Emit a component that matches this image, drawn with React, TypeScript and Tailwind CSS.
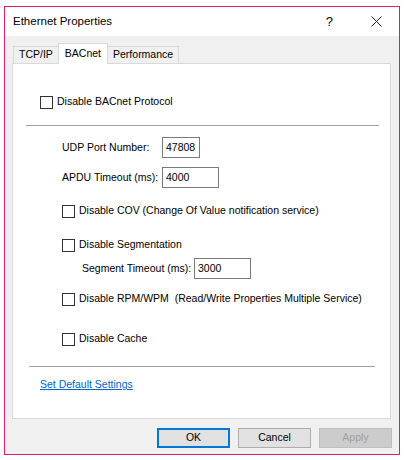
import React from 'react';

const font = { fontFamily: '"Liberation Sans", Arial, sans-serif' };

const Checkbox = ({ label }: { label: string }) => (
  <div className="flex items-center h-[20px]">
    <span className="w-[13px] h-[13px] border border-[#333333] bg-white shrink-0" />
    <span className="ml-[4px] text-[10.5px] text-black whitespace-pre">{label}</span>
  </div>
);

const Field = ({ label, value, labelW, inputW }: { label: string; value: string; labelW: string; inputW: string }) => (
  <div className="flex items-center h-[21px]">
    <span className={`${labelW} text-[10.5px] text-black`}>{label}</span>
    <div className={`${inputW} h-full border border-[#7a7a7a] bg-white flex items-center pl-[3px] text-[10.5px] text-black`}>
      {value}
    </div>
  </div>
);

const Tab = ({ label, active }: { label: string; active?: boolean }) =>
  active ? (
    <div className="h-[21px] -mb-px -mx-px z-10 px-[6px] bg-white border border-b-0 border-[#d9d9d9] flex items-center text-[10.5px] text-black">
      {label}
    </div>
  ) : (
    <div className="h-[17px] px-[5px] bg-[#f0f0f0] border border-b-0 border-[#d9d9d9] flex items-center text-[10.5px] text-black">
      {label}
    </div>
  );

export default function App() {
  return (
    <div className="w-[404px] h-[460px] bg-white pt-[6px] pl-[4px]" style={font}>
      <div className="w-[396px] h-[449px] border border-[#e8196b] flex flex-col">
        {/* title bar */}
        <div className="h-[29px] bg-white flex items-center shrink-0">
          <span className="ml-[8px] text-[11.5px] text-black">Ethernet Properties</span>
          <span className="ml-auto text-[13px] text-black">?</span>
          <svg className="ml-[38px] mr-[17px]" width="11" height="11" viewBox="0 0 11 11">
            <path d="M0.5 0.5L10.5 10.5M10.5 0.5L0.5 10.5" stroke="#222" strokeWidth="1" />
          </svg>
        </div>

        <div className="flex-1 bg-[#f0f0f0] flex flex-col">
          {/* tabs */}
          <div className="flex items-end h-[27px] pl-[8px]">
            <Tab label="TCP/IP" />
            <Tab label="BACnet" active />
            <Tab label="Performance" />
          </div>

          {/* panel */}
          <div className="ml-[7px] w-[379px] h-[356px] bg-white border border-[#d9d9d9] flex flex-col">
            <div className="pt-[28px] pl-[27px]">
              <Checkbox label="Disable BACnet Protocol" />
            </div>
            <div className="mt-[13px] ml-[13px] w-[353px] h-px bg-[#a0a0a0]" />

            <div className="pl-[49px] flex flex-col">
              <div className="mt-[11px]">
                <Field label="UDP Port Number:" value="47808" labelW="w-[100px]" inputW="w-[38px]" />
              </div>
              <div className="mt-[9px]">
                <Field label="APDU Timeout (ms):" value="4000" labelW="w-[100px]" inputW="w-[57px]" />
              </div>
              <div className="mt-[13px]">
                <Checkbox label="Disable COV (Change Of Value notification service)" />
              </div>
              <div className="mt-[14px]">
                <Checkbox label="Disable Segmentation" />
              </div>
              <div className="mt-[3px] pl-[20px]">
                <Field label="Segment Timeout (ms):" value="3000" labelW="w-[112px]" inputW="w-[57px]" />
              </div>
              <div className="mt-[10px]">
                <Checkbox label="Disable RPM/WPM  (Read/Write Properties Multiple Service)" />
              </div>
              <div className="mt-[20px]">
                <Checkbox label="Disable Cache" />
              </div>
            </div>

            <div className="mt-[17px] ml-[16px] w-[346px] h-px bg-[#a0a0a0]" />
            <div className="mt-[8px] pl-[27px] h-[20px] flex items-center">
              <span className="text-[10.5px] text-[#0066cc] underline">Set Default Settings</span>
            </div>
          </div>

          {/* buttons */}
          <div className="mt-[9px] flex justify-end gap-[8px] pr-[7px]">
            <button className="w-[73px] h-[20px] bg-[#e1e1e1] border-2 border-[#0078d7] text-[10.5px] text-black">OK</button>
            <button className="w-[73px] h-[20px] bg-[#e1e1e1] border border-[#adadad] text-[10.5px] text-black">Cancel</button>
            <button className="w-[73px] h-[20px] bg-[#cccccc] border border-[#bfbfbf] text-[10.5px] text-[#a0a0a0]">Apply</button>
          </div>
        </div>
      </div>
    </div>
  );
}
